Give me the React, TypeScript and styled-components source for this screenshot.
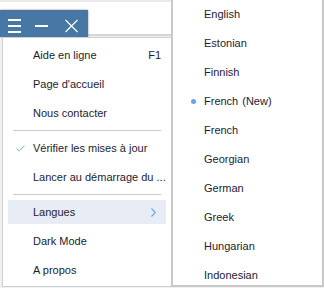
import React from "react";
import styled, { createGlobalStyle } from "styled-components";

const Global = createGlobalStyle`
  html, body { margin: 0; padding: 0; background: #f0f0f0; }
  body { font-family: "Liberation Sans", Arial, sans-serif; font-size: 11px; color: #1c1c30; }
  * { box-sizing: border-box; }
`;

const Stage = styled.div`
  position: relative;
  width: 324px;
  height: 288px;
  overflow: hidden;
  background: #f0f0f0;
  display: flex;
  flex-direction: column;
`;

const TopStrip = styled.div`
  height: 2px;
  background: #ebebeb;
`;

const Toolbar = styled.div`
  height: 34px;
  background: #ffffff;
  border-bottom: 2px solid #d6d6d6;
`;

const Popup = styled.div`
  position: absolute;
  left: 0;
  top: 10px;
`;

const TitleBar = styled.div`
  width: 88px;
  height: 27px;
  background: #4777a5;
  box-shadow: 0 0 2px rgba(0, 0, 0, 0.45);
  display: flex;
  align-items: flex-start;
  padding: 9px 0 0 8px;
  gap: 14px;
`;

const Icon = styled.svg<{ $shift?: number }>`
  display: block;
  margin-left: ${(p) => p.$shift ?? 0}px;
`;

const Menu = styled.div`
  position: absolute;
  left: 2px;
  top: 27px;
  width: 171px;
  background: #ffffff;
  border: 1px solid #cfcfcf;
  padding: 3px 0 1px;
`;

const SubMenu = styled.div`
  position: absolute;
  left: 171px;
  top: -4px;
  bottom: 1px;
  width: 153px;
  background: #ffffff;
  border: 1px solid #c8c8c8;
  border-width: 1px 2px 2px 2px;
  padding: 3px 0 0 1px;
  overflow: hidden;
`;

const Item = styled.div`
  height: 29px;
  padding: 2px 6px 3px 5px;
`;

const Body = styled.div<{ $active?: boolean }>`
  height: 24px;
  display: flex;
  align-items: center;
  padding: 0 5px 0 8px;
  background: ${(p) => (p.$active ? "#e7ecf5" : "transparent")};
  white-space: nowrap;
`;

const Slot = styled.span`
  width: 17px;
  flex: none;
  display: flex;
  align-items: center;
`;

const Label = styled.span`
  flex: 1;
`;

const Note = styled.span`
  margin-left: 4px;
`;

const Shortcut = styled.span`
  flex: none;
`;

const Chevron = styled.svg`
  flex: none;
  display: block;
  margin-right: 5px;
`;

const Bullet = styled.span`
  width: 5px;
  height: 5px;
  border-radius: 50%;
  background: #6fa2e6;
  margin-left: 4px;
`;

const Separator = styled.div`
  height: 1px;
  margin: 2px 11px 3px 10px;
  background: #c9c9c9;
`;

const Check = () => (
  <svg width="9" height="7" viewBox="0 0 9 7">
    <path d="M0.5 3.5 L3.2 6 L8.5 0.6" fill="none" stroke="#7aaae4" strokeWidth="1" />
  </svg>
);

const languages: { name: string; note?: string; current?: boolean }[] = [
  { name: "English" },
  { name: "Estonian" },
  { name: "Finnish" },
  { name: "French", note: "(New)", current: true },
  { name: "French" },
  { name: "Georgian" },
  { name: "German" },
  { name: "Greek" },
  { name: "Hungarian" },
  { name: "Indonesian" },
];

export default function App() {
  return (
    <>
      <Global />
      <Stage>
        <TopStrip />
        <Toolbar />
        <Popup>
          <TitleBar>
            <Icon width="13" height="14" viewBox="0 0 13 14">
              <rect x="0" y="0" width="13" height="2" fill="#fff" />
              <rect x="0" y="6" width="13" height="2" fill="#fff" />
              <rect x="0" y="12" width="13" height="2" fill="#fff" />
            </Icon>
            <Icon width="13" height="14" viewBox="0 0 13 14">
              <rect x="0" y="6" width="13" height="2" fill="#fff" />
            </Icon>
            <Icon width="13" height="14" viewBox="0 0 13 14" $shift={3}>
              <path d="M0.5 1 L12.5 13 M12.5 1 L0.5 13" stroke="#fff" strokeWidth="1.1" fill="none" />
            </Icon>
          </TitleBar>
          <Menu>
            <Item>
              <Body>
                <Slot />
                <Label>Aide en ligne</Label>
                <Shortcut>F1</Shortcut>
              </Body>
            </Item>
            <Item>
              <Body>
                <Slot />
                <Label>Page d'accueil</Label>
              </Body>
            </Item>
            <Item>
              <Body>
                <Slot />
                <Label>Nous contacter</Label>
              </Body>
            </Item>
            <Separator />
            <Item>
              <Body>
                <Slot>
                  <Check />
                </Slot>
                <Label>Vérifier les mises à jour</Label>
              </Body>
            </Item>
            <Item>
              <Body>
                <Slot />
                <Label>Lancer au démarrage du ...</Label>
              </Body>
            </Item>
            <Separator />
            <Item>
              <Body $active>
                <Slot />
                <Label>Langues</Label>
                <Chevron width="5" height="9" viewBox="0 0 5 9">
                  <path d="M0.5 0.5 L4.3 4.5 L0.5 8.5" fill="none" stroke="#6fa2e6" strokeWidth="1.1" />
                </Chevron>
              </Body>
            </Item>
            <Item>
              <Body>
                <Slot />
                <Label>Dark Mode</Label>
              </Body>
            </Item>
            <Item>
              <Body>
                <Slot />
                <Label>A propos</Label>
              </Body>
            </Item>
          </Menu>
        </Popup>
        <SubMenu>
          {languages.map((l, i) => (
            <Item key={i}>
              <Body>
                <Slot>{l.current && <Bullet />}</Slot>
                <Label>
                  {l.name}
                  {l.note && <Note>{l.note}</Note>}
                </Label>
              </Body>
            </Item>
          ))}
        </SubMenu>
      </Stage>
    </>
  );
}
